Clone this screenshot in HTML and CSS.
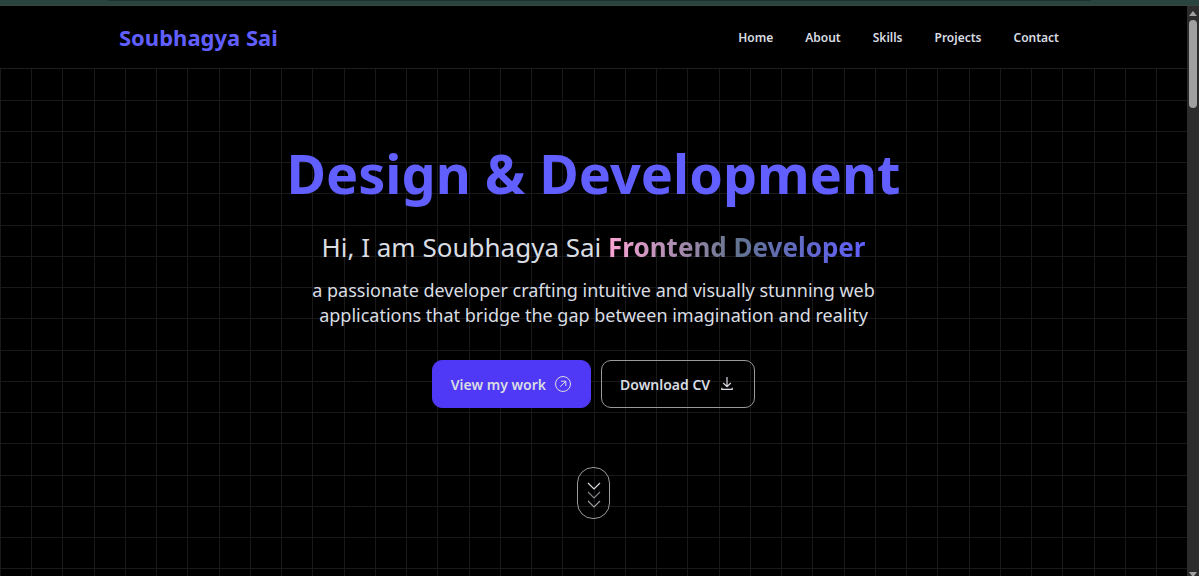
FILE: index.html
```
<!DOCTYPE html>
<html lang="en">
<head>
  <meta charset="UTF-8">
  <meta name="viewport" content="width=device-width, initial-scale=1.0">
  <title>Soubhagya Sai</title>
  <link rel="stylesheet" href="styles.css">
</head>
<body>
  <div class="top-strip"><div class="top-strip-tab"></div></div>

  <div class="viewport">
    <div class="page">
      <header class="header">
        <a class="logo" href="#home">Soubhagya Sai</a>
        <nav class="nav">
          <a href="#home">Home</a>
          <a href="#about">About</a>
          <a href="#skills">Skills</a>
          <a href="#projects">Projects</a>
          <a href="#contact">Contact</a>
        </nav>
      </header>

      <main class="hero" id="home">
        <h1>Design &amp; Development</h1>
        <h2>Hi, I am Soubhagya Sai <span class="role">Frontend Developer</span></h2>
        <p>a passionate developer crafting intuitive and visually stunning web<br>applications that bridge the gap between imagination and reality</p>

        <div class="actions">
          <a class="btn btn-primary" href="#projects">
            View my work
            <svg width="18" height="18" viewBox="0 0 18 18" fill="none" stroke="currentColor">
              <circle cx="9" cy="9" r="7.5"/>
              <path d="M6.2 11.8 11.8 6.2M7 6.2h4.8V11"/>
            </svg>
          </a>
          <a class="btn btn-outline" href="#cv">
            Download CV
            <svg width="18" height="18" viewBox="0 0 18 18" fill="none" stroke="currentColor" stroke-width="1.2">
              <path d="M9 2v9.500M5.200 8 9 11.700 12.800 8M3.800 12.800v1.600h10.400v-1.600"/>
            </svg>
          </a>
        </div>

        <a class="scroll-down" href="#about" aria-label="Scroll down">
          <svg width="14" height="26" viewBox="0 0 14 26" fill="none" stroke="currentColor" stroke-width="1.2">
            <path d="M1 1 7 7 13 1"/>
            <path d="M1 10 7 16 13 10" opacity=".6"/>
            <path d="M1 19 7 25 13 19" opacity=".7"/>
          </svg>
        </a>
      </main>
    </div>

    <div class="scrollbar">
      <svg width="8" height="5" viewBox="0 0 8 5"><path d="M4 0 8 5H0z" fill="#a0a0a0"/></svg>
      <div class="thumb"></div>
      <svg class="arrow-down" width="8" height="4" viewBox="0 0 8 4"><path d="M0 0h8L5 4H3z" fill="#a0a0a0"/></svg>
    </div>
  </div>
</body>
</html>
```
FILE: styles.css
```
* {
  box-sizing: border-box;
}
body {
  margin: 0;
  min-height: 100vh;
  display: flex;
  flex-direction: column;
  background: #000;
  color: #d9dde3;
  font-family: 'Noto Sans', 'Open Sans', sans-serif;
}
a {
  color: inherit;
  text-decoration: none;
}
.top-strip {
  height: 6px;
  padding: 0 9%;
  background: #29433f;
  border-bottom: 1px solid #34443f;
}
.top-strip-tab {
  height: 1px;
  background: #1b332f;
}
.viewport {
  flex: 1;
  display: flex;
}
.page {
  flex: 1;
  display: flex;
  flex-direction: column;
}
.header {
  display: flex;
  justify-content: space-between;
  align-items: center;
  height: 63px;
  padding: 0 128px 0 119px;
  border-bottom: 1px solid #1e1e1e;
}
.logo {
  color: #615fff;
  font-size: 22px;
  font-weight: bold;
}
.nav {
  display: flex;
  gap: 32px;
  font-size: 12px;
  font-weight: 600;
}
.hero {
  flex: 1;
  display: flex;
  flex-direction: column;
  align-items: center;
  padding: 70px 24px 0;
  text-align: center;
  /* four grid cells per 125px tile */
  background-image:
    linear-gradient(to right, #191919 1px, transparent 1px 31px, #191919 31px 32px, transparent 32px 62px, #191919 62px 63px, transparent 63px 94px, #191919 94px 95px, transparent 95px),
    linear-gradient(to bottom, transparent 31px, #191919 31px 32px, transparent 32px 62px, #191919 62px 63px, transparent 63px 93px, #191919 93px 94px, transparent 94px 124px, #191919 124px);
  background-size: 125px 125px;
}
h1 {
  margin: 0;
  color: #615fff;
  font-size: 54px;
  line-height: 68px;
  font-weight: bold;
}
h2 {
  margin: 21px 0 0;
  font-size: 26px;
  line-height: 38px;
  font-weight: normal;
}
.role {
  font-weight: bold;
  color: transparent;
  background: linear-gradient(to right, #fda5d5, #62748e, #615fff);
  background-clip: text;
  -webkit-background-clip: text;
}
p {
  margin: 12px 0 0;
  font-size: 18px;
  line-height: 25px;
}
.actions {
  display: flex;
  gap: 10px;
  margin-top: 32px;
}
.btn {
  display: flex;
  align-items: center;
  gap: 8px;
  height: 48px;
  padding: 0 18px;
  border: 1px solid #9a9a9a;
  border-radius: 10px;
  font-size: 14px;
  font-weight: 600;
}
.btn-primary {
  border-color: #4f39f6;
  background: #4f39f6;
}
.scroll-down {
  display: flex;
  justify-content: center;
  align-items: center;
  width: 33px;
  height: 52px;
  padding-top: 4px;
  margin-top: 59px;
  border: 1px solid #9a9a9a;
  border-radius: 16px;
}
.scrollbar {
  display: flex;
  flex-direction: column;
  align-items: center;
  width: 12px;
  padding-top: 5px;
  background: #2c2c2c;
}
.thumb {
  width: 8px;
  height: 88px;
  margin-top: 4px;
  border-radius: 4px;
  background: #a0a0a0;
}
.arrow-down {
  margin-top: auto;
}
```
